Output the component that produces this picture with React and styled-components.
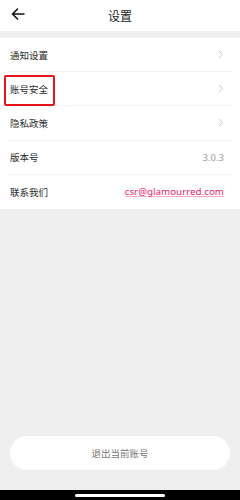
import React from 'react'
import styled, { createGlobalStyle } from 'styled-components'

const GlobalStyle = createGlobalStyle`
    html, body {
        margin: 0;
        padding: 0;
        background: #efefef;
    }
    #root {
        height: 500px;
    }
`

const FONT = `"Noto Sans CJK SC", "Liberation Sans", sans-serif`

const items = [
    { label: "通知设置", arrow: true },
    { label: "账号安全", arrow: true, marked: true },
    { label: "隐私政策", arrow: true },
    { label: "版本号", value: "3.0.3" },
    { label: "联系我们", link: "csr@glamourred.com" },
]

const Chevron = () => (
    <svg width="6" height="9" viewBox="0 0 6 9">
        <path d="M1 1 L4.5 4.5 L1 8" fill="none" stroke="#c6c6c6" strokeWidth="1" />
    </svg>
)

const BackArrow = () => (
    <svg width="14" height="12" viewBox="0 0 14 12">
        <path d="M13 6 H1.5 M6.5 1 L1.5 6 L6.5 11" fill="none" stroke="#111" strokeWidth="1.6" strokeLinecap="round" strokeLinejoin="round" />
    </svg>
)

const SettingsPage = () => {
    return (
        <Wrapper>
            <Header>
                <BackButton><BackArrow /></BackButton>
                <Title>设置</Title>
            </Header>
            <List>
                {items.map((item, i) => (
                    <Row key={i} last={i === items.length - 1}>
                        <Label>{item.label}</Label>
                        {item.arrow && <Chevron />}
                        {item.value && <Value>{item.value}</Value>}
                        {item.link && <Link>{item.link}</Link>}
                        {item.marked && <Marker />}
                    </Row>
                ))}
            </List>
            <Spacer />
            <LogoutButton>退出当前账号</LogoutButton>
            <HomeBar>
                <HomeIndicator />
            </HomeBar>
        </Wrapper>
    )
}

const Wrapper = styled.div`
    width: 240px;
    height: 500px;
    display: flex;
    flex-direction: column;
    background: #efefef;
    font-family: ${FONT};
`

const Header = styled.div`
    height: 31px;
    background: #fff;
    display: flex;
    align-items: center;
    justify-content: center;
    position: relative;
`

const BackButton = styled.div`
    position: absolute;
    left: 11px;
    top: 8px;
    display: flex;
`

const Title = styled.h1`
    margin: 0;
    font-size: 12px;
    font-weight: 400;
    color: #222;
`

const List = styled.div`
    margin-top: 7px;
    background: #fff;
    padding: 0 8px;
`

const Row = styled.div`
    position: relative;
    height: 34.2px;
    box-sizing: border-box;
    display: flex;
    align-items: center;
    justify-content: space-between;
    padding: 0 8px 0 2px;
    border-bottom: ${(props) => props.last ? 'none' : '1px solid #f2f2f2'};
`

const Label = styled.span`
    font-size: 9.5px;
    color: #2a2a2a;
`

const Value = styled.span`
    font-size: 9.5px;
    color: #a0a0a0;
    font-family: "Noto Sans", sans-serif;
`

const Link = styled.span`
    font-size: 9.8px;
    color: #e8246b;
    text-decoration: underline;
    text-decoration-color: #f5a9c4;
    font-family: "Noto Sans", sans-serif;
`

const Marker = styled.div`
    position: absolute;
    left: -4px;
    top: 3px;
    width: 47px;
    height: 27px;
    border: 2px solid #e5161b;
    border-radius: 2px;
`

const Spacer = styled.div`
    flex: 1;
`

const LogoutButton = styled.div`
    margin: 0 10px 20px;
    height: 34px;
    border-radius: 17px;
    background: #fff;
    display: flex;
    align-items: center;
    justify-content: center;
    font-size: 9.5px;
    color: #777;
`

const HomeBar = styled.div`
    height: 10px;
    background: #000;
    display: flex;
    justify-content: center;
    padding-top: 4px;
    box-sizing: border-box;
`

const HomeIndicator = styled.div`
    width: 90px;
    height: 3px;
    background: #fff;
    border-radius: 2px;
`

export default function App() {
    return (
        <>
            <GlobalStyle />
            <SettingsPage />
        </>
    )
}
